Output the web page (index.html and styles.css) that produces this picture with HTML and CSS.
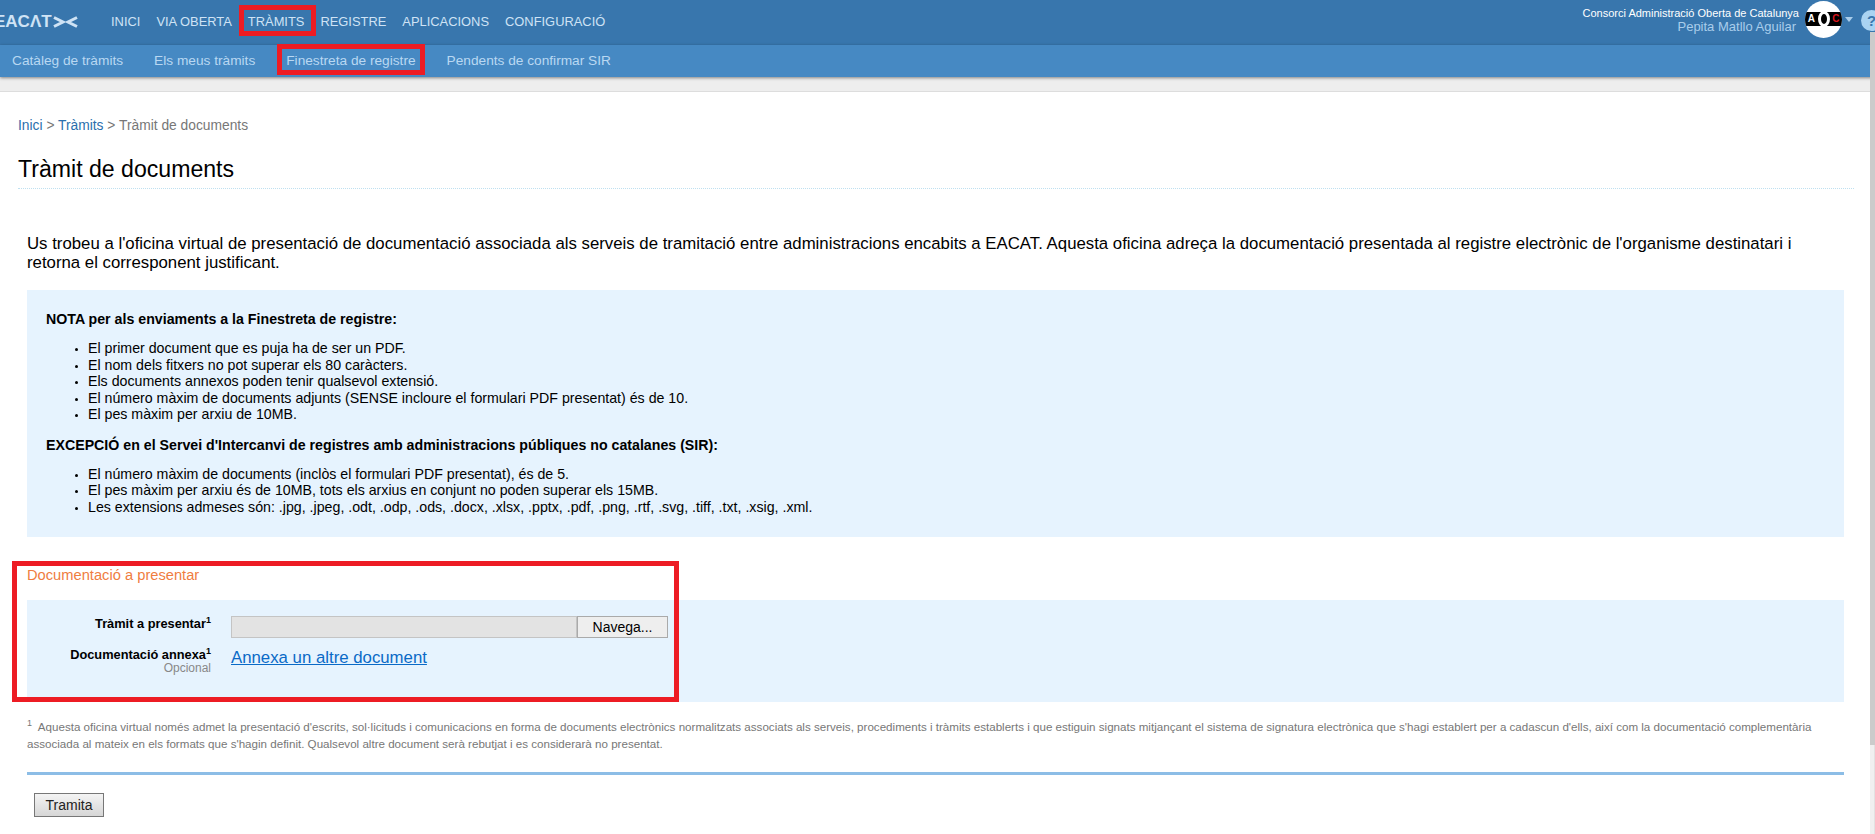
FILE: index.html
```html
<!DOCTYPE html>
<html lang="ca">
<head>
<meta charset="utf-8">
<title>Tràmit de documents</title>
<link rel="stylesheet" href="styles.css">
</head>
<body>
<header class="topbar">
  <div class="logo">EACΛT<svg class="logo-mark" width="25" height="14" viewBox="0 0 25 14"><path d="M1 2.500 10 7 1 11.500M24 2.500 15 7l9 4.500" fill="none" stroke="#cfe3f5" stroke-width="3"/></svg></div>
  <nav class="mainnav">
    <a>INICI</a><a>VIA OBERTA</a><a class="active">TRÀMITS</a><a>REGISTRE</a><a>APLICACIONS</a><a>CONFIGURACIÓ</a>
  </nav>
  <div class="user">
    <div class="org">Consorci Administració Oberta de Catalunya</div>
    <div class="uname">Pepita Matllo Aguilar</div>
  </div>
  <div class="avatar"><div class="av-band"><span class="av-a">A</span><span class="av-o"></span><span class="av-c">C</span></div></div>
  <span class="caret"></span>
  <span class="help">?</span>
</header>
<nav class="subnav">
  <a>Catàleg de tràmits</a><a>Els meus tràmits</a><a>Finestreta de registre</a><a>Pendents de confirmar SIR</a>
</nav>
<div class="strip"></div>
<main class="page">
  <div class="crumbs"><a>Inici</a> &gt; <a>Tràmits</a> &gt; Tràmit de documents</div>
  <h1 class="title">Tràmit de documents</h1>
  <div class="body">
    <p class="intro">Us trobeu a l'oficina virtual de presentació de documentació associada als serveis de tramitació entre administracions encabits a EACAT. Aquesta oficina adreça la documentació presentada al registre electrònic de l'organisme destinatari i retorna el corresponent justificant.</p>
    <section class="note">
      <p class="note-head">NOTA per als enviaments a la Finestreta de registre:</p>
      <ul>
        <li>El primer document que es puja ha de ser un PDF.</li>
        <li>El nom dels fitxers no pot superar els 80 caràcters.</li>
        <li>Els documents annexos poden tenir qualsevol extensió.</li>
        <li>El número màxim de documents adjunts (SENSE incloure el formulari PDF presentat) és de 10.</li>
        <li>El pes màxim per arxiu de 10MB.</li>
      </ul>
      <p class="note-head">EXCEPCIÓ en el Servei d'Intercanvi de registres amb administracions públiques no catalanes (SIR):</p>
      <ul>
        <li>El número màxim de documents (inclòs el formulari PDF presentat), és de 5.</li>
        <li>El pes màxim per arxiu és de 10MB, tots els arxius en conjunt no poden superar els 15MB.</li>
        <li>Les extensions admeses són: .jpg, .jpeg, .odt, .odp, .ods, .docx, .xlsx, .pptx, .pdf, .png, .rtf, .svg, .tiff, .txt, .xsig, .xml.</li>
      </ul>
    </section>
    <h2 class="section-title">Documentació a presentar</h2>
    <section class="form">
      <div class="row">
        <div class="label"><b>Tràmit a presentar<sup>1</sup></b></div>
        <div class="file"><span class="file-path"></span><span class="file-btn">Navega...</span></div>
      </div>
      <div class="row">
        <div class="label"><b>Documentació annexa<sup>1</sup></b><small>Opcional</small></div>
        <a class="attach">Annexa un altre document</a>
      </div>
    </section>
    <p class="foot"><sup>1</sup>&nbsp; Aquesta oficina virtual només admet la presentació d'escrits, sol·licituds i comunicacions en forma de documents electrònics normalitzats associats als serveis, procediments i tràmits establerts i que estiguin signats mitjançant el sistema de signatura electrònica que s'hagi establert per a cadascun d'ells, així com la documentació complementària associada al mateix en els formats que s'hagin definit. Qualsevol altre document serà rebutjat i es considerarà no presentat.</p>
    <hr class="rule">
    <button class="submit">Tramita</button>
  </div>
</main>
<div class="scrollbar"><div class="scroll-thumb"></div></div>
<div class="mark mark-nav"></div>
<div class="mark mark-sub"></div>
<div class="mark mark-form"></div>
</body>
</html>
```
FILE: styles.css
```css
* { box-sizing: border-box; }
html, body { margin: 0; height: 834px; overflow: hidden; }
body { font-family: "Liberation Sans", Arial, sans-serif; background: #fff; color: #000; position: relative; }
.topbar { height: 45px; background: #3876ad; display: flex; align-items: center; color: #cfe3f5; }
.logo { width: 117px; margin-left: -6px; margin-top: -2px; font-size: 17px; font-weight: 700; color: #cfe3f5; display: flex; align-items: center; flex: none; }
.logo-mark { margin-left: 1px; flex: none; }
.mainnav { display: flex; gap: 16px; font-size: 12.900px; flex: 1; margin-top: -2px; }
.mainnav a { color: #cfe3f5; }
.user { text-align: right; line-height: 13px; margin-top: -6px; }
.org { font-size: 11px; color: #fff; }
.uname { font-size: 13px; color: #a9cdeb; padding-right: 3px; }
.avatar { width: 37px; height: 37px; border-radius: 50%; background: #fff; margin-left: 6px; margin-top: -7px; display: flex; align-items: center; overflow: hidden; flex: none; }
.av-band { width: 100%; height: 14px; background: #000; display: flex; align-items: center; justify-content: space-between; }
.av-a, .av-c { font-size: 10px; font-weight: 700; line-height: 14px; width: 13px; text-align: center; color: #fff; }
.av-c { color: #d8151d; }
.av-o { width: 12px; height: 16px; border: 3px solid #fff; border-radius: 50%; background: #000; flex: none; }
.caret { width: 0; height: 0; border: 4.500px solid transparent; border-top: 5px solid #a9cdeb; border-bottom: 0; margin-left: 3px; margin-top: -6px; flex: none; }
.help { width: 21px; height: 21px; border-radius: 50%; background: #a9d3f2; color: #3876ad; font-weight: 700; font-size: 15px; line-height: 21px; text-align: center; margin-left: 8px; margin-right: -7px; margin-top: -5px; flex: none; }
.subnav { height: 32px; background: #4689c3; display: flex; align-items: center; gap: 31px; padding: 0 0 2px 12px; font-size: 13.700px; box-shadow: 0 1px 3px rgba(0,0,0,.45); position: relative; }
.subnav a { color: #b9d8f2; }
.strip { height: 15px; background: #eee; border-bottom: 1px solid #ddd; }
.page { padding: 0 21px 0 18px; }
.crumbs { margin-top: 26px; font-size: 13.800px; line-height: 16px; color: #777; }
.crumbs a { color: #2a6fad; }
.title { margin: 19px 0 0; font-size: 23.100px; font-weight: 400; line-height: 32px; padding-bottom: 3px; border-bottom: 1px dotted #bfe0f0; }
.body { padding: 0 10px 0 9px; }
.intro { margin: 45px 0 0; font-size: 16.800px; line-height: 19px; }
.note { margin-top: 18px; background: #e6f3fe; padding: 19px 19px 16px; font-size: 14.200px; height: 247px; }
.note-head { margin: 0; font-weight: 700; line-height: 20px; }
.note ul { margin: 11px 0 12px; padding-left: 42px; list-style: disc; line-height: 16.500px; }
.note li::marker { font-size: 10px; }
.section-title { margin: 29px 0 0; font-size: 14.700px; font-weight: 400; color: #ef7d3f; line-height: 18px; }
.form { margin-top: 16px; background: #e6f3fe; height: 102px; padding-top: 16px; }
.row { display: flex; align-items: flex-start; gap: 20px; margin-bottom: 9px; }
.label { width: 184px; text-align: right; font-size: 12.800px; line-height: 15px; }
.label sup { font-size: 9px; line-height: 0; }
.label small { display: block; font-size: 12px; line-height: 13px; color: #888; }
.file { display: flex; height: 22px; width: 437px; font-size: 14px; }
.file-path { flex: 1; background: #e3e3e3; border: 1px solid #c4c4c4; }
.file-btn { width: 91px; text-align: center; background: #eee; border: 1px solid #aaa; line-height: 20px; }
.attach { font-size: 16.800px; color: #0a6ac7; text-decoration: underline; line-height: 20px; padding-top: 1px; }
.foot { margin: 16px 0 0; font-size: 11.600px; line-height: 17px; color: #777; }
.foot sup { font-size: 9px; line-height: 0; }
.rule { margin: 20px 0 0; border: 0; height: 3px; background: #8cbde6; }
.submit { display: block; margin: 18px 0 0 7px; width: 70px; height: 24px; padding: 0; font: 14px "Liberation Sans", Arial, sans-serif; color: #222; border: 1px solid #777; background: linear-gradient(#f4f4f4, #d6d6d6); }
.scrollbar { position: absolute; right: 0; top: 32px; bottom: 0; width: 5px; background: #f0f0f0; border-right: 1px solid #e2e2e2; }
.scroll-thumb { height: 713px; margin-right: -1px; background: #cbcbcb; }
.mark { position: absolute; border: 5px solid #ed1c24; pointer-events: none; }
.mark-nav { left: 239px; top: 5px; width: 77px; height: 31px; }
.mark-sub { left: 277px; top: 44px; width: 148px; height: 31px; }
.mark-form { left: 12px; top: 561px; width: 667px; height: 141px; }
```
